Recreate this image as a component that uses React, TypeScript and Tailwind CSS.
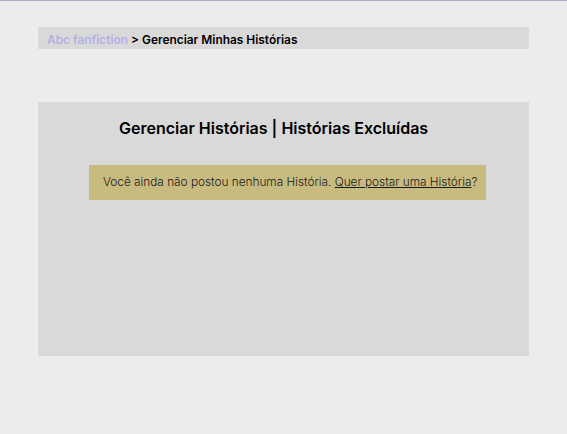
export default function App() {
    return (
        <div className="min-h-[434px] bg-[#ececec] border-t border-[#aeaac4] font-['Inter',sans-serif]">
            <div className="pt-[26px] pl-[38px] w-[529px]">
                <div className="h-[22px] bg-[#d9d9d9] flex items-center pl-[9px] pt-[4px] text-[11.9px] font-semibold">
                    <span className="text-[#b3b0e6]">Abc fanfiction</span>
                    <span className="text-black">&nbsp;&gt; Gerenciar Minhas Histórias</span>
                </div>
            </div>

            <div className="ml-[38px] mt-[53px] w-[491px] h-[254px] bg-[#d9d9d9]">
                <h1 className="pl-[81px] pt-[15px] text-[16px] font-semibold text-black leading-[22px]">
                    Gerenciar Histórias | Histórias Excluídas
                </h1>
                <div className="ml-[51px] mt-[26px] w-[397px] h-[35px] bg-[#c8bb7f] flex items-center pl-[14px] pt-[1px] text-[11.8px] font-light text-[#1a1a1a] whitespace-nowrap">
                    <span>
                        Você ainda não postou nenhuma História.{" "}
                        <a className="underline">Quer postar uma História</a>?
                    </span>
                </div>
            </div>
        </div>
    );
}
